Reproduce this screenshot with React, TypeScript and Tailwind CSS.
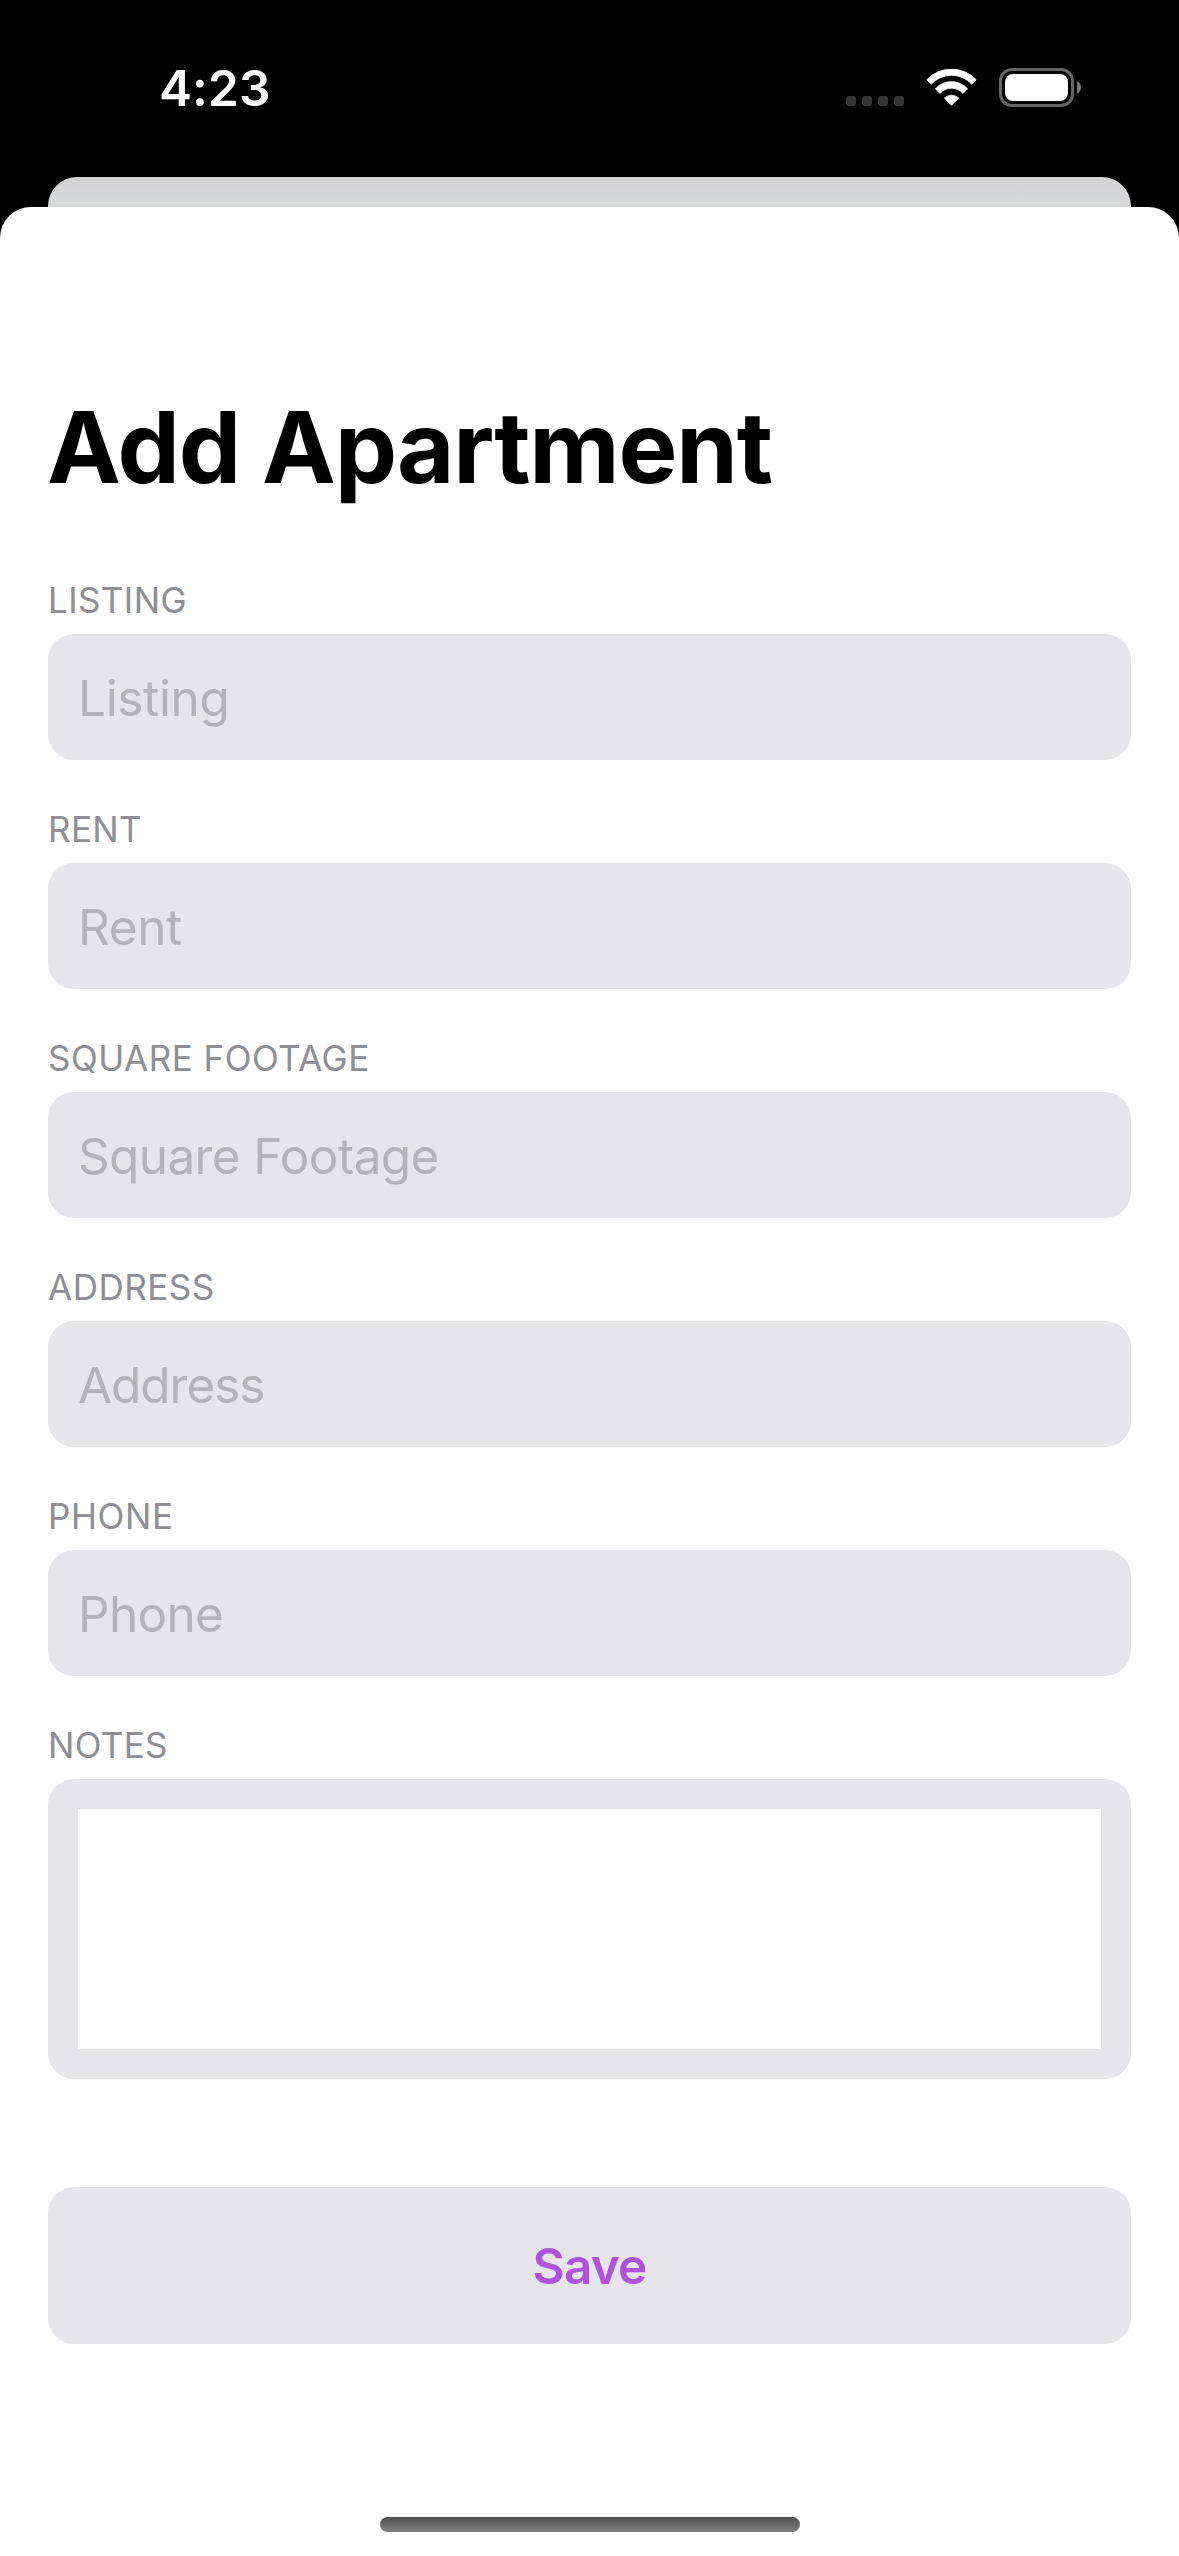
function CellularDots() {
  return (
    <div className="mt-[38px] flex gap-1.5">
      {[0, 1, 2, 3].map((i) => (
        <span key={i} className="size-[10px] rounded-[3.5px] bg-[#353535]" />
      ))}
    </div>
  );
}

function WifiIcon() {
  return (
    <svg className="mt-[11px] ml-[22px]" width="51" height="37" viewBox="0 0 51 37" fill="#fff" stroke="#fff" strokeWidth="0.8" strokeLinejoin="round">
      <path d="M0.8 10.7A34.1 34.1 0 0 1 50.2 10.7L46 15.3A27.9 27.9 0 0 0 5 15.3Z" />
      <path d="M9.4 19.8A21.6 21.6 0 0 1 41.6 19.8L37 24.4A15.2 15.2 0 0 0 14 24.4Z" />
      <path d="M18.3 28.9A11.4 11.4 0 0 1 32.7 28.9L25.5 36.3Z" />
    </svg>
  );
}

function BatteryIcon() {
  return (
    <svg className="mt-[10px] ml-[22px]" width="82" height="39" viewBox="0 0 82 39">
      <rect x="1.5" y="1.5" width="72" height="36" rx="11.5" fill="none" stroke="#666" strokeWidth="3" />
      <rect x="6" y="6" width="63" height="27" rx="8" fill="#fff" />
      <path d="M78 13.3C80.4 14.3 82 16.7 82 19.5S80.4 24.7 78 25.7Z" fill="#7a7a7a" />
    </svg>
  );
}

const fields = [
  { label: "LISTING", placeholder: "Listing", labelClass: "tracking-[0.4px]", textClass: "tracking-[-0.35px]" },
  { label: "RENT", placeholder: "Rent", labelClass: "tracking-[0.36px]", textClass: "tracking-[-0.4px]" },
  { label: "SQUARE FOOTAGE", placeholder: "Square Footage", labelClass: "tracking-[0.48px]", textClass: "tracking-[-0.65px]" },
  { label: "ADDRESS", placeholder: "Address", labelClass: "tracking-[0.5px]", textClass: "tracking-[-1.05px]" },
  { label: "PHONE", placeholder: "Phone", labelClass: "tracking-[0.6px]", textClass: "tracking-[-0.7px]" },
];

function Label({ text, className }: { text: string; className: string }) {
  return <div className={`mb-[13px] text-[35px] leading-[42px] text-[#8e8e93] ${className}`}>{text}</div>;
}

export default function App() {
  return (
    <div className="flex h-[2556px] w-[1179px] flex-col overflow-hidden bg-black font-['Inter',sans-serif]">
      <header className="flex h-[177px] shrink-0 items-start justify-between pt-[58px] pr-[98px] pl-[159px] text-white">
        <span className="text-[49.5px] leading-[60px] font-semibold tracking-[0.14px]">4:23</span>
        <div className="flex items-start">
          <CellularDots />
          <WifiIcon />
          <BatteryIcon />
        </div>
      </header>

      <div className="mx-12 h-[30px] shrink-0 rounded-t-[29px] bg-linear-to-b from-[#d3d3d4] to-[#d7d8da]" />

      <main className="flex flex-1 flex-col rounded-t-[31px] bg-white px-12 pt-[180px]">
        <h1 className="mb-[72px] -ml-px text-[99px] leading-[120px] font-bold tracking-[-1.2px] whitespace-nowrap text-black">
          Add Apartment
        </h1>

        <div className="flex flex-col gap-12">
          {fields.map((f) => (
            <div key={f.label}>
              <Label text={f.label} className={f.labelClass} />
              <div className="flex h-[126px] items-center rounded-[26px] bg-[#e5e5ea] pt-0.5 pl-[30px]">
                <span className={`text-[49.5px] leading-[60px] text-[#b4b3b8] ${f.textClass}`}>{f.placeholder}</span>
              </div>
            </div>
          ))}
          <div>
            <Label text="NOTES" className="tracking-[0.32px]" />
            <div className="h-[300px] rounded-[26px] bg-[#e5e5ea] p-[30px]">
              <div className="h-full bg-white" />
            </div>
          </div>
        </div>

        <button className="mt-[108px] flex h-[157px] items-center justify-center rounded-[26px] bg-[#e5e5ea] pt-px text-[49.5px] leading-[60px] font-semibold tracking-[-0.8px] text-[#af52de]">
          Save
        </button>

        <div className="mt-auto mb-6 h-[15px] w-[420px] self-center rounded-full bg-linear-to-b from-[#505050] to-[#808080]" />
      </main>
    </div>
  );
}
